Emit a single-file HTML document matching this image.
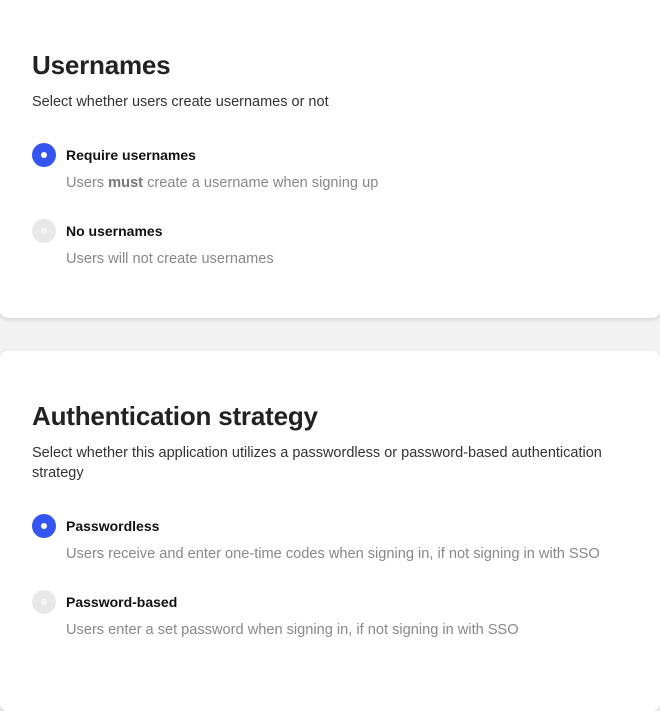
<!DOCTYPE html>
<html><head><style>
body{margin:0;width:660px;height:690px;background:#f2f2f2;font-family:"Liberation Sans",sans-serif;overflow:hidden;position:relative}
.card{position:absolute;left:0;width:660px;background:#fff;border-radius:8px;box-shadow:0 2px 4px rgba(0,0,0,.12)}
h2{position:absolute;left:32px;margin:0;font-size:26px;font-weight:600;color:#222;letter-spacing:-0.2px}
.sub{position:absolute;left:32px;font-size:14.5px;color:#333;line-height:20px;width:600px}
.r{position:absolute;left:32px;width:24px;height:24px;border-radius:50%;background:#e8e8e8}
.r::after{content:"";position:absolute;left:9px;top:9px;width:6px;height:6px;border-radius:50%;background:#f5f5f5}
.r.on{background:#3555f0}.r.on::after{background:#fff}
.lb{position:absolute;left:66px;font-size:14px;font-weight:bold;color:#111}
.ds{position:absolute;left:66px;font-size:14.6px;color:#888;white-space:nowrap}
</style></head><body>
<div class="card" style="top:-10px;height:328px"></div>
<div class="card" style="top:351px;height:360px"></div>
<h2 style="top:50px">Usernames</h2>
<div class="sub" style="top:92px">Select whether users create usernames or not</div>
<div class="r on" style="top:143px"></div>
<div class="lb" style="top:147px">Require usernames</div>
<div class="ds" style="top:175px">Users <b style="color:#777">must</b> create a username when signing up</div>
<div class="r" style="top:219px"></div>
<div class="lb" style="top:223px">No usernames</div>
<div class="ds" style="top:251px">Users will not create usernames</div>
<h2 style="top:401px">Authentication strategy</h2>
<div class="sub" style="top:443px">Select whether this application utilizes a passwordless or password-based authentication<br>strategy</div>
<div class="r on" style="top:514px"></div>
<div class="lb" style="top:518px">Passwordless</div>
<div class="ds" style="top:546px">Users receive and enter one-time codes when signing in, if not signing in with SSO</div>
<div class="r" style="top:590px"></div>
<div class="lb" style="top:594px">Password-based</div>
<div class="ds" style="top:622px">Users enter a set password when signing in, if not signing in with SSO</div>
</body></html>
